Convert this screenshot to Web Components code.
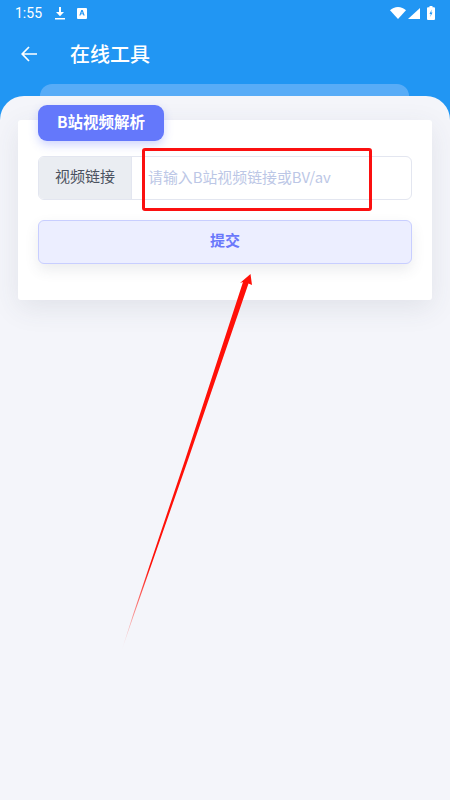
<!DOCTYPE html>
<html>
<head>
<meta charset="utf-8">
<title>在线工具</title>
<style>
html, body { margin: 0; padding: 0; }
body { width: 450px; height: 800px; overflow: hidden; background: #f4f5fa; font-family: "Noto Sans CJK SC", "Noto Sans", sans-serif; }
</style>
</head>
<body>
<tool-page>
  <status-bar slot="header"></status-bar>
  <app-toolbar slot="header">在线工具</app-toolbar>
  <parse-card title-text="B站视频解析">
    <url-field label="视频链接" placeholder="请输入B站视频链接或BV/av"></url-field>
    <submit-button>提交</submit-button>
  </parse-card>
</tool-page>

<script>
class StatusBar extends HTMLElement {
  constructor() {
    super();
    const shadowRoot = this.attachShadow({ mode: 'open' });
    shadowRoot.innerHTML = `
<style>
:host {
  display: flex;
  align-items: center;
  height: 26px;
  padding: 0 15px;
  color: #fff;
  font: 400 14px Roboto, sans-serif;
}
.time { width: 40px; }
svg { display: block; fill: #fff; }
.left { display: flex; align-items: center; gap: 12px; }
.right { display: flex; align-items: center; margin-left: auto; }
</style>
<span class="time">1:55</span>
<div class="left">
  <svg width="10" height="14" viewBox="0 0 10 14"><path d="M4 1h2v5h3L5 10.200 1 6h3zM0 12h10v1.500H0z"/></svg>
  <svg width="10" height="11" viewBox="0 0 10 11"><path fill-rule="evenodd" d="M1 0h8a1 1 0 0 1 1 1v9a1 1 0 0 1-1 1H1a1 1 0 0 1-1-1V1a1 1 0 0 1 1-1zM4.300 2 2.300 7.500h1.200l.4-1.200h2.100l.4 1.200h1.300L5.700 2zM5 3.500l.7 1.900H4.300z"/></svg>
</div>
<div class="right">
  <svg width="16" height="12" viewBox="0 0 16 12" style="margin-right:2px"><path d="M0 3.200C2 1.300 4.900 0 8 0s6 1.300 8 3.200L8 12z"/></svg>
  <svg width="12" height="11" viewBox="0 0 12 11" style="margin-right:7px"><path d="M12 0v11H0z"/></svg>
  <svg width="8" height="14" viewBox="0 0 8 14"><path fill-rule="evenodd" d="M2.500 0h3v1.200H7a1 1 0 0 1 1 1V13a1 1 0 0 1-1 1H1a1 1 0 0 1-1-1V2.200a1 1 0 0 1 1-1h1.500zM4.700 3.500 2.500 8h1.300l-.5 3 2.200-4.500H4.200z"/></svg>
</div>
`;
  }
}

class AppToolbar extends HTMLElement {
  constructor() {
    super();
    const shadowRoot = this.attachShadow({ mode: 'open' });
    shadowRoot.innerHTML = `
<style>
:host {
  display: flex;
  align-items: center;
  height: 56px;
  padding-left: 21px;
  color: #fff;
}
svg { display: block; fill: none; stroke: #fff; stroke-width: 1.700; }
.title { margin-left: 33px; font-size: 20px; font-weight: 500; line-height: 28px; }
</style>
<svg width="16" height="16" viewBox="0 0 16 16"><path d="M16 8H1.500M8 1 1.200 8 8 15"/></svg>
<span class="title"><slot></slot></span>
`;
  }
}

class ParseCard extends HTMLElement {
  constructor() {
    super();
    const shadowRoot = this.attachShadow({ mode: 'open' });
    shadowRoot.innerHTML = `
<style>
:host {
  display: block;
  position: relative;
  height: 180px;
  padding: 36px 20px 0;
  box-sizing: border-box;
  background: #fff;
  border-radius: 3px;
  box-shadow: 0 8px 28px rgba(60, 64, 90, .1);
}
.tab {
  position: absolute;
  left: 20px;
  top: -15px;
  display: flex;
  align-items: center;
  justify-content: center;
  width: 126px;
  height: 36px;
  padding-bottom: 5px;
  box-sizing: border-box;
  border-radius: 9px;
  background: #6478fb;
  color: #fff;
  font-size: 15.500px;
  font-weight: 700;
  box-shadow: 0 4px 10px rgba(100, 120, 251, .3);
}
.body { display: flex; flex-direction: column; gap: 20px; }
</style>
<div class="tab"></div>
<div class="body"><slot></slot></div>
`;
    this.$tab = shadowRoot.querySelector('.tab');
  }

  connectedCallback() {
    this.$tab.textContent = this.getAttribute('title-text');
  }
}

class UrlField extends HTMLElement {
  constructor() {
    super();
    const shadowRoot = this.attachShadow({ mode: 'open' });
    shadowRoot.innerHTML = `
<style>
:host {
  display: flex;
  height: 44px;
  box-sizing: border-box;
  border: 1px solid #e3e6f0;
  border-radius: 6px;
  overflow: hidden;
  background: #fff;
}
.label {
  display: flex;
  align-items: center;
  justify-content: center;
  width: 93px;
  padding-bottom: 5px;
  box-sizing: border-box;
  background: #eaedf2;
  color: #4a5260;
  font-size: 15px;
  border-right: 1px solid #e3e6f0;
}
.placeholder {
  display: flex;
  align-items: center;
  padding: 0 0 4px 16px;
  color: #bcc7e6;
  font-size: 14.900px;
}
</style>
<span class="label"></span>
<span class="placeholder"></span>
`;
    this.$label = shadowRoot.querySelector('.label');
    this.$placeholder = shadowRoot.querySelector('.placeholder');
  }

  connectedCallback() {
    this.$label.textContent = this.getAttribute('label');
    this.$placeholder.textContent = this.getAttribute('placeholder');
  }
}

class SubmitButton extends HTMLElement {
  constructor() {
    super();
    const shadowRoot = this.attachShadow({ mode: 'open' });
    shadowRoot.innerHTML = `
<style>
:host {
  display: flex;
  align-items: center;
  justify-content: center;
  height: 44px;
  padding-bottom: 5px;
  box-sizing: border-box;
  border: 1px solid #c8ceff;
  border-radius: 6px;
  background: #eceeff;
  color: #6a78fb;
  font-size: 15px;
  font-weight: 700;
  box-shadow: 0 6px 14px rgba(60, 64, 90, .1);
}
</style>
<slot></slot>
`;
  }
}

class ToolPage extends HTMLElement {
  constructor() {
    super();
    const shadowRoot = this.attachShadow({ mode: 'open' });
    shadowRoot.innerHTML = `
<style>
:host {
  display: block;
  position: relative;
  width: 450px;
  height: 800px;
  overflow: hidden;
}
header { height: 120px; background: #2196f3; }
.plate {
  height: 12px;
  margin: 2px 41px 0 40px;
  background: #58acf7;
  border-radius: 14px 14px 0 0;
}
main {
  height: 704px;
  margin-top: -24px;
  padding: 24px 18px 0;
  box-sizing: border-box;
  background: #f4f5fa;
  border-radius: 24px 24px 0 0;
  position: relative;
}
/* annotations drawn on top of the screenshot */
.mark {
  position: absolute;
  left: 142px;
  top: 148px;
  width: 230px;
  height: 63px;
  box-sizing: border-box;
  border: 3px solid #fb1010;
  border-radius: 3px;
}
.arrow { position: absolute; left: 0; top: 0; pointer-events: none; }
</style>
<header>
  <slot name="header"></slot>
  <div class="plate"></div>
</header>
<main><slot></slot></main>
<div class="mark"></div>
<svg class="arrow" width="450" height="800" viewBox="0 0 450 800">
  <defs>
    <linearGradient id="fade" gradientUnits="userSpaceOnUse" x1="121" y1="651" x2="150" y2="566">
      <stop offset="0" stop-color="#ff1008" stop-opacity="0"/>
      <stop offset="1" stop-color="#ff1008"/>
    </linearGradient>
  </defs>
  <path fill="url(#fade)" d="M250.500 274 252 285 248.500 283.500 188 460 133.900 615 121.500 651 132.900 615 185 460 243 282 240 283z"/>
</svg>
`;
  }
}

customElements.define('status-bar', StatusBar);
customElements.define('app-toolbar', AppToolbar);
customElements.define('parse-card', ParseCard);
customElements.define('url-field', UrlField);
customElements.define('submit-button', SubmitButton);
customElements.define('tool-page', ToolPage);
</script>
</body>
</html>
